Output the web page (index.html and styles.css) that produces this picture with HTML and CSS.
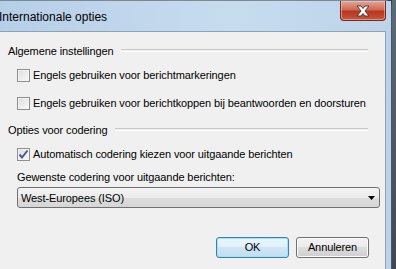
FILE: index.html
```html
<html>
<head>
<link rel="stylesheet" href="styles.css">
</head>
  <body>
    <div class="screen">
      <div class="window">
        <div class="titlebar">
          <span class="title">Internationale opties</span>
          <div class="close">
            <svg width="18" height="12" viewBox="0 0 18 12">
              <path d="M3 1 L7 1 L9 3.5 L11 1 L15 1 L11 6 L15 11 L11 11 L9 8.5 L7 11 L3 11 L7 6 Z" fill="#fff" stroke="#4a3a3a" stroke-width="1"/>
            </svg>
          </div>
        </div>
        <div class="client">
          <div class="group-head"><span>Algemene instellingen</span><div class="rule"></div></div>
          <div class="option first"><span class="box"></span><span>Engels gebruiken voor berichtmarkeringen</span></div>
          <div class="option second"><span class="box"></span><span>Engels gebruiken voor berichtkoppen bij beantwoorden en doorsturen</span></div>
          <div class="group-head second-head"><span>Opties voor codering</span><div class="rule"></div></div>
          <div class="option first"><span class="box checked">
            <svg width="11" height="11" viewBox="0 0 11 11"><path d="M1.5 5.5 L4 8.5 L9.5 1.5" fill="none" stroke="#4a5c8c" stroke-width="2"/></svg>
          </span><span>Automatisch codering kiezen voor uitgaande berichten</span></div>
          <div class="label">Gewenste codering voor uitgaande berichten:</div>
          <div class="select">
            <span>West-Europees (ISO)</span>
            <svg width="7" height="4" viewBox="0 0 7 4"><path d="M0 0 L7 0 L3.5 4 Z" fill="#000"/></svg>
          </div>
          <div class="buttons">
            <div class="btn default">OK</div>
            <div class="btn">Annuleren</div>
          </div>
        </div>
      </div>
      <div class="outside"></div>
    </div>
  </body>
</html>
```
FILE: styles.css
```css
body {
    margin: 0;
    font-family: "Liberation Sans", Arial, sans-serif;
    font-size: 11px;
    letter-spacing: -0.1px;
    color: #000;
}

.screen {
    display: flex;
    width: 396px;
    height: 269px;
    overflow: hidden;
    background: #3c3f44;
    white-space: nowrap;
}

.window {
    width: 392px;
    display: flex;
    flex-direction: column;
    background: linear-gradient(to bottom, #c2d8ec 0, #b9d1ea 30px, #bcd3ea 100%);
    border-top: 1px solid #7c8894;
    border-right: 1px solid #4a5866;
    border-top-right-radius: 7px;
    box-sizing: border-box;
}

.titlebar {
    height: 30px;
    display: flex;
    align-items: flex-start;
    background: linear-gradient(to right, #b6cfe8, #c8dcef 60%, #bcd3ea);
}

.title {
    margin-left: -1px;
    margin-top: 9px;
    line-height: 14px;
    font-size: 12px;
    letter-spacing: 0;
}

.close {
    margin-left: auto;
    margin-right: 5px;
    width: 44px;
    height: 19px;
    border: 1px solid #6e2c24;
    border-top: none;
    border-radius: 0 0 4px 4px;
    background: linear-gradient(to bottom, #e4a596 0, #cf6a55 45%, #b8361e 55%, #c9553e 100%);
    box-shadow: inset 0 0 0 1px rgba(255, 210, 200, 0.5);
    display: flex;
    align-items: center;
    justify-content: center;
}

.client {
    flex: 1;
    margin-right: 5px;
    background: #f0f0f0;
    border-top: 1px solid #8ea2b4;
    border-right: 1px solid #8ea2b4;
    padding-left: 8px;
}

.group-head {
    display: flex;
    align-items: center;
    height: 14px;
    line-height: 14px;
    margin-top: 12px;
}

.second-head {
    margin-top: 13px;
}

.rule {
    flex: 1;
    margin-left: 7px;
    margin-right: 17px;
    height: 1px;
    border-top: 1px solid #c8c8c8;
    border-bottom: 1px solid #fff;
    margin-top: -1px;
}

.option {
    display: flex;
    align-items: center;
    height: 14px;
    line-height: 14px;
    padding-left: 9px;
}

.option.first {
    margin-top: 10px;
}

.option.second {
    margin-top: 14px;
}

.box {
    width: 11px;
    height: 11px;
    border: 1px solid #8e8f8f;
    background: linear-gradient(135deg, #dcdcdc, #fbfbfb);
    box-shadow: inset 0 0 0 1px #f4f4f4;
    margin-right: 3px;
    display: flex;
    align-items: center;
    justify-content: center;
}

.box.checked svg {
    display: block;
}

.label {
    margin-top: 9px;
    padding-left: 9px;
    height: 14px;
    line-height: 14px;
}

.select {
    margin-top: 3px;
    margin-left: 9px;
    width: 354px;
    height: 19px;
    border: 1px solid #707070;
    border-radius: 3px;
    background: linear-gradient(to bottom, #f3f3f3 0, #ebebeb 50%, #dddddd 50%, #d6d6d6 100%);
    display: flex;
    align-items: center;
    padding-left: 3px;
    padding-right: 4px;
    box-sizing: content-box;
}

.select span {
    flex: 1;
}

.buttons {
    display: flex;
    justify-content: flex-end;
    gap: 7px;
    margin-top: 29px;
    margin-right: 16px;
}

.btn {
    width: 71px;
    height: 19px;
    line-height: 19px;
    text-align: center;
    border: 1px solid #707070;
    border-radius: 3px;
    background: linear-gradient(to bottom, #f2f2f2 0, #ebebeb 50%, #dddddd 50%, #cfcfcf 100%);
    box-shadow: inset 0 0 0 1px #fbfbfb;
}

.btn.default {
    border-color: #3c7fb1;
    box-shadow: inset 0 0 0 1px #9fe2fb;
    background: linear-gradient(to bottom, #eaf6fd 0, #e0eff8 50%, #cfe6f4 50%, #bfdff2 100%);
}

.outside {
    flex: 1;
    background: linear-gradient(to bottom, #5e6a78, #3f4852);
}
```
